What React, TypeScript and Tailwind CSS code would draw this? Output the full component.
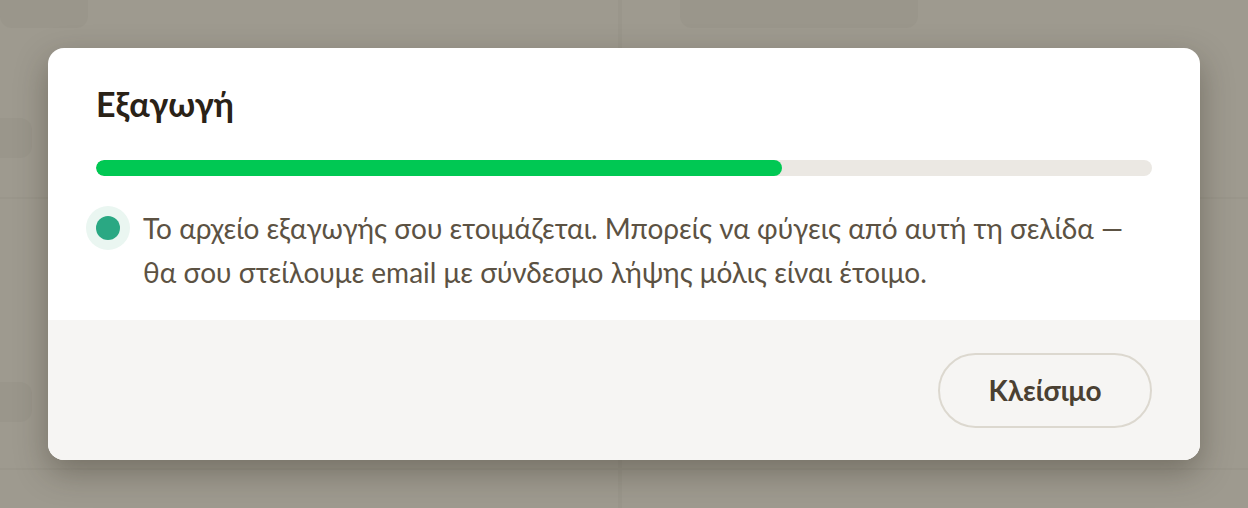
import React from "react";

const FONT = "font-['Lato','Noto_Sans',sans-serif]";

function Backdrop() {
  // faint shapes of the app behind the overlay
  return (
    <div className="absolute inset-0 overflow-hidden" aria-hidden>
      <div className="absolute left-0 top-0 h-[28px] w-[88px] rounded-b-xl bg-[#9a968b]" />
      <div className="absolute left-[618px] top-0 h-full w-[4px] bg-[#9a968b]" />
      <div className="absolute left-[680px] top-0 h-[28px] w-[238px] rounded-b-xl bg-[#9a968b]" />
      <div className="absolute left-0 top-[118px] h-[40px] w-[32px] rounded-r-xl bg-[#9a968b]" />
      <div className="absolute left-0 top-[197px] h-[2px] w-full bg-[#9a968b]" />
      <div className="absolute left-0 top-[382px] h-[40px] w-[32px] rounded-r-xl bg-[#9a968b]" />
      <div className="absolute left-0 top-[468px] h-[2px] w-full bg-[#9a968b]" />
    </div>
  );
}

export default function App() {
  const progress = 65;

  return (
    <div className={`relative h-[508px] w-[1248px] overflow-hidden bg-[#9e9a8f] ${FONT}`}>
      <Backdrop />
      <div className="relative flex h-full items-start justify-center pt-[48px]">
        <div className="w-[1152px] overflow-hidden rounded-2xl bg-white shadow-[0_12px_32px_rgba(40,34,24,0.35)]">
          <div className="flex flex-col px-[48px] pb-[26px] pt-[32px]">
            <h2 className="text-[34px] font-bold leading-[48px] text-[#2a2217]">Εξαγωγή</h2>
            <div className="mt-[32px] h-[16px] w-full overflow-hidden rounded-full bg-[#ebe8e3]">
              <div className="h-full rounded-full bg-[#00c853]" style={{ width: `${progress}%` }} />
            </div>
            <div className="mt-[30px] flex items-start gap-[23px]">
              <span className="mt-[10px] h-[24px] w-[24px] shrink-0 rounded-full bg-[#2aa883] ring-[10px] ring-[#eaf6f1]" />
              <p className="text-[28px] leading-[44px] text-[#5c5243]">
                Το αρχείο εξαγωγής σου ετοιμάζεται. Μπορείς να φύγεις από αυτή τη σελίδα — θα σου στείλουμε email με σύνδεσμο λήψης μόλις είναι έτοιμο.
              </p>
            </div>
          </div>
          <div className="flex h-[140px] items-center justify-end bg-[#f6f5f3] px-[48px]">
            <button
              type="button"
              className="h-[75px] w-[214px] rounded-full border-2 border-[#dcd8cf] text-[28px] font-bold text-[#4a4032]"
            >
              Κλείσιμο
            </button>
          </div>
        </div>
      </div>
    </div>
  );
}
